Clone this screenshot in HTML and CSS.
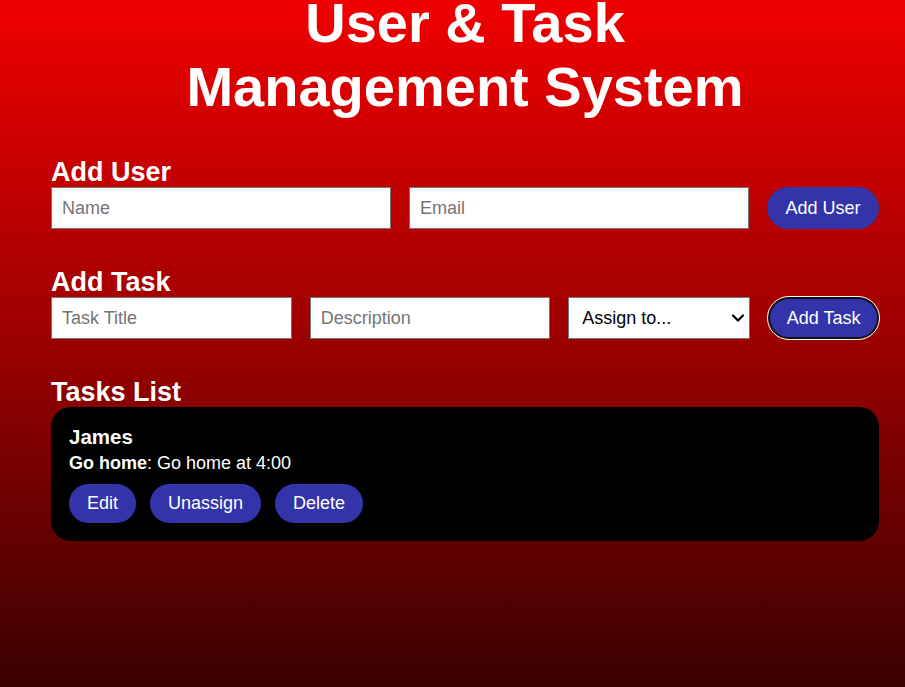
FILE: index.html
```html
<!DOCTYPE html>
<html lang="en">
<head>
<meta charset="utf-8">
<title>User &amp; Task Management System</title>
<link rel="stylesheet" href="styles.css">
</head>
<body>
<main class="container">
  <h1 class="title">User &amp; Task Management System</h1>

  <section class="section">
    <h2 class="section-title">Add User</h2>
    <div class="form-row">
      <input class="field" type="text" placeholder="Name">
      <input class="field" type="email" placeholder="Email">
      <button class="btn">Add User</button>
    </div>
  </section>

  <section class="section">
    <h2 class="section-title">Add Task</h2>
    <div class="form-row">
      <input class="field" type="text" placeholder="Task Title">
      <input class="field" type="text" placeholder="Description">
      <select class="select">
        <option>Assign to...</option>
      </select>
      <button class="btn btn-focused">Add Task</button>
    </div>
  </section>

  <section class="section">
    <h2 class="section-title">Tasks List</h2>
    <div class="task-card">
      <h3 class="task-user">James</h3>
      <p class="task-desc"><strong>Go home</strong>: Go home at 4:00</p>
      <div class="task-actions">
        <button class="btn btn-small">Edit</button>
        <button class="btn btn-small">Unassign</button>
        <button class="btn btn-small">Delete</button>
      </div>
    </div>
  </section>
</main>
</body>
</html>
```

FILE: styles.css
```css
* {
  box-sizing: border-box;
}

html, body {
  margin: 0;
  height: 100%;
}

body {
  font-family: "Liberation Sans", Arial, sans-serif;
  color: #fff;
  background: linear-gradient(to bottom, #f00000 0%, #9a0000 50%, #3a0000 100%);
  overflow: hidden;
}

.container {
  width: 828px;
  margin: 0 26px 0 51px;
}

.title {
  max-width: 600px;
  margin: -9px auto 0;
  font-size: 56px;
  line-height: 64px;
  font-weight: bold;
  text-align: center;
}

.section {
  margin-top: 38px;
}

.section-title {
  margin: 0;
  font-size: 27px;
  line-height: 30px;
  font-weight: bold;
}

.form-row {
  display: flex;
  gap: 18px;
  height: 42px;
}

.field {
  flex: 1 1 0;
  min-width: 0;
  height: 42px;
  padding: 10px;
  border: 1px solid #767676;
  border-radius: 0;
  background: #fff;
  font-family: "Liberation Sans", Arial, sans-serif;
  font-size: 18px;
  color: #000;
}

.field::placeholder {
  color: #757575;
}

.select {
  flex: 0 0 182px;
  height: 42px;
  padding: 0 30px 0 13px;
  border: 1px solid #767676;
  border-radius: 0;
  -webkit-appearance: none;
  appearance: none;
  background: #fff url("data:image/svg+xml;utf8,<svg xmlns='http://www.w3.org/2000/svg' width='14' height='10' viewBox='0 0 14 10'><path d='M2 2.5 L7 7.5 L12 2.5' fill='none' stroke='black' stroke-width='2.2' stroke-linecap='round' stroke-linejoin='round'/></svg>") no-repeat right 4px center;
  font-family: "Liberation Sans", Arial, sans-serif;
  font-size: 18px;
  color: #000;
}

.btn {
  flex: 0 0 auto;
  padding: 0 18.5px;
  border: none;
  border-radius: 999px;
  background: #3333aa;
  color: #fff;
  font-family: "Liberation Sans", Arial, sans-serif;
  font-size: 18px;
  cursor: pointer;
}

.btn-focused {
  border: 2px solid #111;
  outline: 1px solid #fff;
  padding: 0 16.5px;
}

.task-card {
  background: #000;
  border-radius: 20px;
  padding: 18px 18px 18px;
}

.task-user {
  margin: 0;
  font-size: 20.5px;
  font-weight: bold;
}

.task-desc {
  margin: 4px 0 10px;
  font-size: 18px;
}

.task-actions {
  display: flex;
  gap: 14px;
}

.btn-small {
  padding: 9px 18px;
}
```
